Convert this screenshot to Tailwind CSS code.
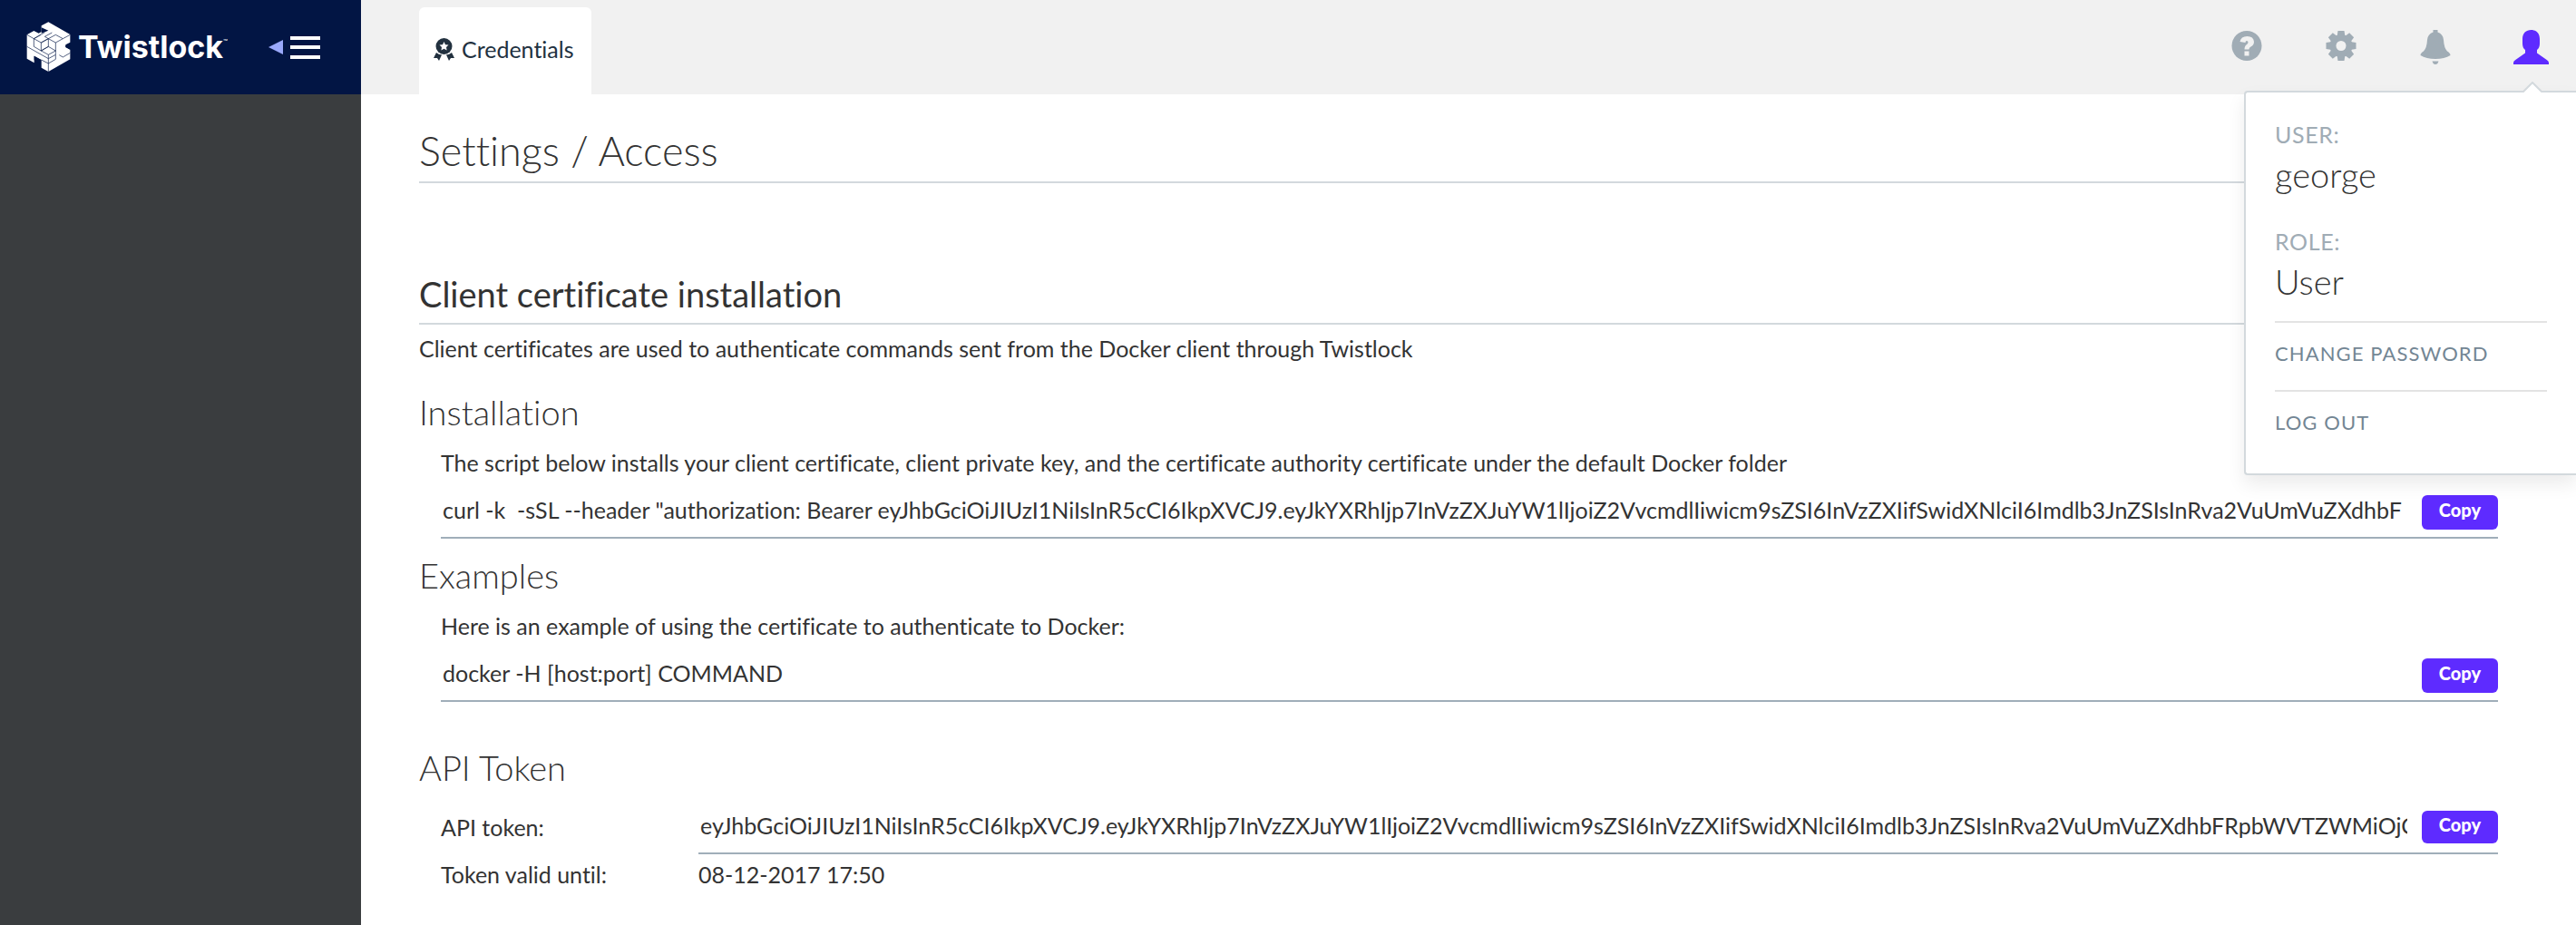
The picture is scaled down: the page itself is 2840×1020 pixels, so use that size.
<!DOCTYPE html>
<html lang="en">
<head>
<meta charset="utf-8">
<title>Twistlock – Settings / Access</title>
<script src="https://cdn.jsdelivr.net/npm/@tailwindcss/browser@4"></script>
</head>
<body class="flex min-h-screen bg-white font-['Lato',sans-serif] text-[25px] leading-8 font-normal text-[#333333] [font-variant-ligatures:none]">
  <aside class="w-[398px] shrink-0 bg-[#3a3d3f]">
    <div class="flex h-[104px] items-center bg-[#021544] pl-[29px]">
      <a href="#" class="flex items-center gap-2 text-white" aria-label="Twistlock home">
        <svg class="h-[56px] w-[49px]" viewBox="0 0 147 168" fill="#fff" stroke="#021544" stroke-width="2" stroke-linejoin="round">
          <path d="M2 43 25 30 41 38 50 33V13L73 1 145 42V68L130 76V84L145 92V124L73 165 50 152V126L26 113V136L2 122Z" stroke="none"/>
          <path d="M50 19 73 29 50 38ZM26 113 48 126V140L26 126ZM130 79 145 71V92L130 84Z" fill="#021544" stroke="none"/>
          <path d="M2 43 25 56 48 43M25 56 61 35M25 56V82L49 96V69L25 56M49 69 73 56 61 49 85 36M49 69 73 56 97 43 121 56 97 69 73 56M121 56 145 43M73 56V82L49 96M97 69V96M73 82 97 96 73 109 49 96ZM2 82 73 122V165M73 109V122L97 109V96M73 138 97 124V109M73 138 50 126M109 110 121 117 145 103" fill="none"/>
        </svg>
        <span class="flex font-['Inter',sans-serif] text-[34px] leading-10 font-bold">Twistlock<span class="pt-2 text-[8px] leading-3 font-normal">™</span></span>
      </a>
      <button type="button" aria-label="Collapse menu" class="ml-auto mr-[45px] flex items-center gap-2">
        <svg class="h-4 w-4" viewBox="0 0 16 16"><path d="M0 8 16 0V16Z" fill="#9aa9fb"/></svg>
        <svg class="h-[25px] w-[33px]" viewBox="0 0 33 25" fill="#fff"><path d="M0 0h33v4H0zM0 10h33v4H0zM0 21h33v4H0z"/></svg>
      </button>
    </div>
  </aside>

  <div class="min-w-0 flex-1">
    <header class="flex h-[104px] items-end bg-[#f1f1f1] pl-16">
      <a href="#" class="flex h-24 w-[190px] items-center gap-2 rounded-t-md bg-white pb-1 pl-4 text-[25px] text-[#22313f]">
        <svg class="h-[25px] w-[23px] shrink-0" viewBox="0 0 23 25" fill="#22313f">
          <circle cx="11.500" cy="9" r="9"/>
          <path d="M3 16 0 22 4 22 6 25 9 18.500Q5.500 18 3 16ZM20 16 23 22 19 22 17 25 14 18.500Q17.500 18 20 16Z"/>
          <path d="M11.500 4 13 7.200 16.500 7.600 14 10 14.600 13.500 11.500 11.800 8.400 13.500 9 10 6.500 7.600 10 7.200Z" fill="#fff"/>
        </svg>
        Credentials
      </a>
      <div class="relative ml-auto flex h-full items-center gap-[68px] pr-[30px] text-[#a0acb5]">
        <button type="button" aria-label="Help">
          <svg class="h-9 w-9" viewBox="0 0 36 36"><circle cx="18" cy="16.500" r="16.500" fill="currentColor"/><path d="M10.500 12Q11.500 6 18.500 6T26 12Q26 15.500 22.500 17.500 20.500 18.500 20.500 20.500H15.500Q15.500 16.500 18 15 19.500 14 19.500 12.500T18 11 16.500 13ZM15.500 22.500H20.500V27.500H15.500Z" fill="#f1f1f1"/></svg>
        </button>
        <button type="button" aria-label="Settings">
          <svg class="h-9 w-9" viewBox="0 0 36 36"><g fill="currentColor" transform="translate(18 16.500)"><circle r="12.500"/><path d="M-3.500-16.500H3.500L4.500-10H-4.500ZM-3.500 16.500H3.500L4.500 10H-4.500ZM-16.500-3.500V3.500L-10 4.500V-4.500ZM16.500-3.500V3.500L10 4.500V-4.500Z"/><path transform="rotate(45)" d="M-3.500-16.500H3.500L4.500-10H-4.500ZM-3.500 16.500H3.500L4.500 10H-4.500ZM-16.500-3.500V3.500L-10 4.500V-4.500ZM16.500-3.500V3.500L10 4.500V-4.500Z"/><circle r="5.500" fill="#f1f1f1"/></g></svg>
        </button>
        <button type="button" aria-label="Notifications">
          <svg class="h-[38px] w-9" viewBox="0 0 36 38" fill="currentColor"><path d="M15.500 0H20.500V2.500Q26.500 4.500 27 11 27.500 20 31 23.500 34.500 25.500 34.500 28 28 32 18 32T1.500 28Q1.500 25.500 5 23.500 8.500 20 9 11 9.500 4.500 15.500 2.500ZM14.500 34.500H21.500Q20.500 38 18 38T14.500 34.500Z"/></svg>
        </button>
        <button type="button" aria-label="Account" class="text-[#5e2bff]">
          <svg class="h-[38px] w-[39px]" viewBox="0 0 39 38" fill="currentColor"><path d="M19.500 0C25 0 29 3.500 29 10V15Q29 20 26 22V25.500L36 32.500Q39 34 39 36V38H0V36Q0 34 3 32.500L13 25.500V22Q10 20 10 15V10C10 3.500 14 0 19.500 0Z"/></svg>
        </button>
        <div class="absolute top-[100px] right-0 w-[366px] rounded-l-sm border-2 border-r-0 border-[#d3d9dd] bg-white px-8 pt-[30px] pb-10 text-[#333333] shadow-[0_10px_20px_rgba(0,0,0,0.08)]">
          <svg class="absolute -top-3 right-[37px] h-3 w-[22px]" viewBox="0 0 22 12"><path d="M0 12 11 1 22 12" fill="#fff" stroke="#d3d9dd" stroke-width="2"/></svg>
          <dl>
            <dt class="tracking-wide text-[#a0acb5]">USER:</dt>
            <dd class="mt-[6px] text-[38px] leading-11 font-light">george</dd>
            <dt class="mt-9 tracking-wide text-[#a0acb5]">ROLE:</dt>
            <dd class="mt-[6px] text-[38px] leading-11 font-light">User</dd>
          </dl>
          <nav class="text-[22px] text-[#738694]">
            <a href="#" class="mt-[22px] block border-t-2 border-[#e3e3e3] pt-[18px] pb-6 tracking-wider">CHANGE PASSWORD</a>
            <a href="#" class="block border-t-2 border-[#e3e3e3] pt-[18px] tracking-wider">LOG OUT</a>
          </nav>
        </div>
      </div>
    </header>

    <main class="pr-[62px] pl-16">
      <h1 class="border-b-2 border-[#d3d9dd] pt-[38px] pb-[10px] text-[45px] leading-12 font-light">Settings / Access</h1>
      <h2 class="mt-[100px] border-b-2 border-[#d3d9dd] pb-[10px] text-[38px] leading-11">Client certificate installation</h2>
      <p class="mt-[10px]">Client certificates are used to authenticate commands sent from the Docker client through Twistlock</p>

      <section>
        <h3 class="mt-8 text-[38px] leading-11 font-light">Installation</h3>
        <div class="px-6">
          <label for="install" class="mt-[18px] block">The script below installs your client certificate, client private key, and the certificate authority certificate under the default Docker folder</label>
          <div class="mt-[10px] flex items-start gap-4 border-b-2 border-[#a0aeb9] pt-[10px] pb-2">
            <input id="install" type="text" readonly class="h-8 min-w-0 flex-1 pl-[2px] outline-none" value="curl -k  -sSL --header &quot;authorization: Bearer eyJhbGciOiJIUzI1NiIsInR5cCI6IkpXVCJ9.eyJkYXRhIjp7InVzZXJuYW1lIjoiZ2VvcmdlIiwicm9sZSI6InVzZXIifSwidXNlciI6Imdlb3JnZSIsInRva2VuUmVuZXdhbF">
            <button type="button" class="h-[38px] w-[84px] rounded-md bg-[#5e2bff] pb-[6px] text-[20px] leading-6 font-black text-white">Copy</button>
          </div>
        </div>
      </section>

      <section>
        <h3 class="mt-[18px] text-[38px] leading-11 font-light">Examples</h3>
        <div class="px-6">
          <label for="example" class="mt-[18px] block">Here is an example of using the certificate to authenticate to Docker:</label>
          <div class="mt-[10px] flex items-start gap-4 border-b-2 border-[#a0aeb9] pt-[10px] pb-2">
            <input id="example" type="text" readonly class="h-8 min-w-0 flex-1 pl-[2px] outline-none" value="docker -H [host:port] COMMAND">
            <button type="button" class="h-[38px] w-[84px] rounded-md bg-[#5e2bff] pb-[6px] text-[20px] leading-6 font-black text-white">Copy</button>
          </div>
        </div>
      </section>

      <section>
        <h3 class="mt-[50px] text-[38px] leading-11 font-light">API Token</h3>
        <div class="mt-[18px] grid grid-cols-[284px_minmax(0,1fr)] gap-y-[6px] px-6">
          <label for="token" class="pt-[10px]">API token:</label>
          <div class="flex items-start gap-4 border-b-2 border-[#a0aeb9] pt-2 pb-[10px]">
            <input id="token" type="text" readonly class="h-8 min-w-0 flex-1 pl-[2px] outline-none" value="eyJhbGciOiJIUzI1NiIsInR5cCI6IkpXVCJ9.eyJkYXRhIjp7InVzZXJuYW1lIjoiZ2VvcmdlIiwicm9sZSI6InVzZXIifSwidXNlciI6Imdlb3JnZSIsInRva2VuUmVuZXdhbFRpbWVTZWMiOjC">
            <button type="button" class="h-9 w-[84px] rounded-md bg-[#5e2bff] pb-[6px] text-[20px] leading-6 font-black text-white">Copy</button>
          </div>
          <span>Token valid until:</span>
          <span>08-12-2017 17:50</span>
        </div>
      </section>
    </main>
  </div>
</body>
</html>
